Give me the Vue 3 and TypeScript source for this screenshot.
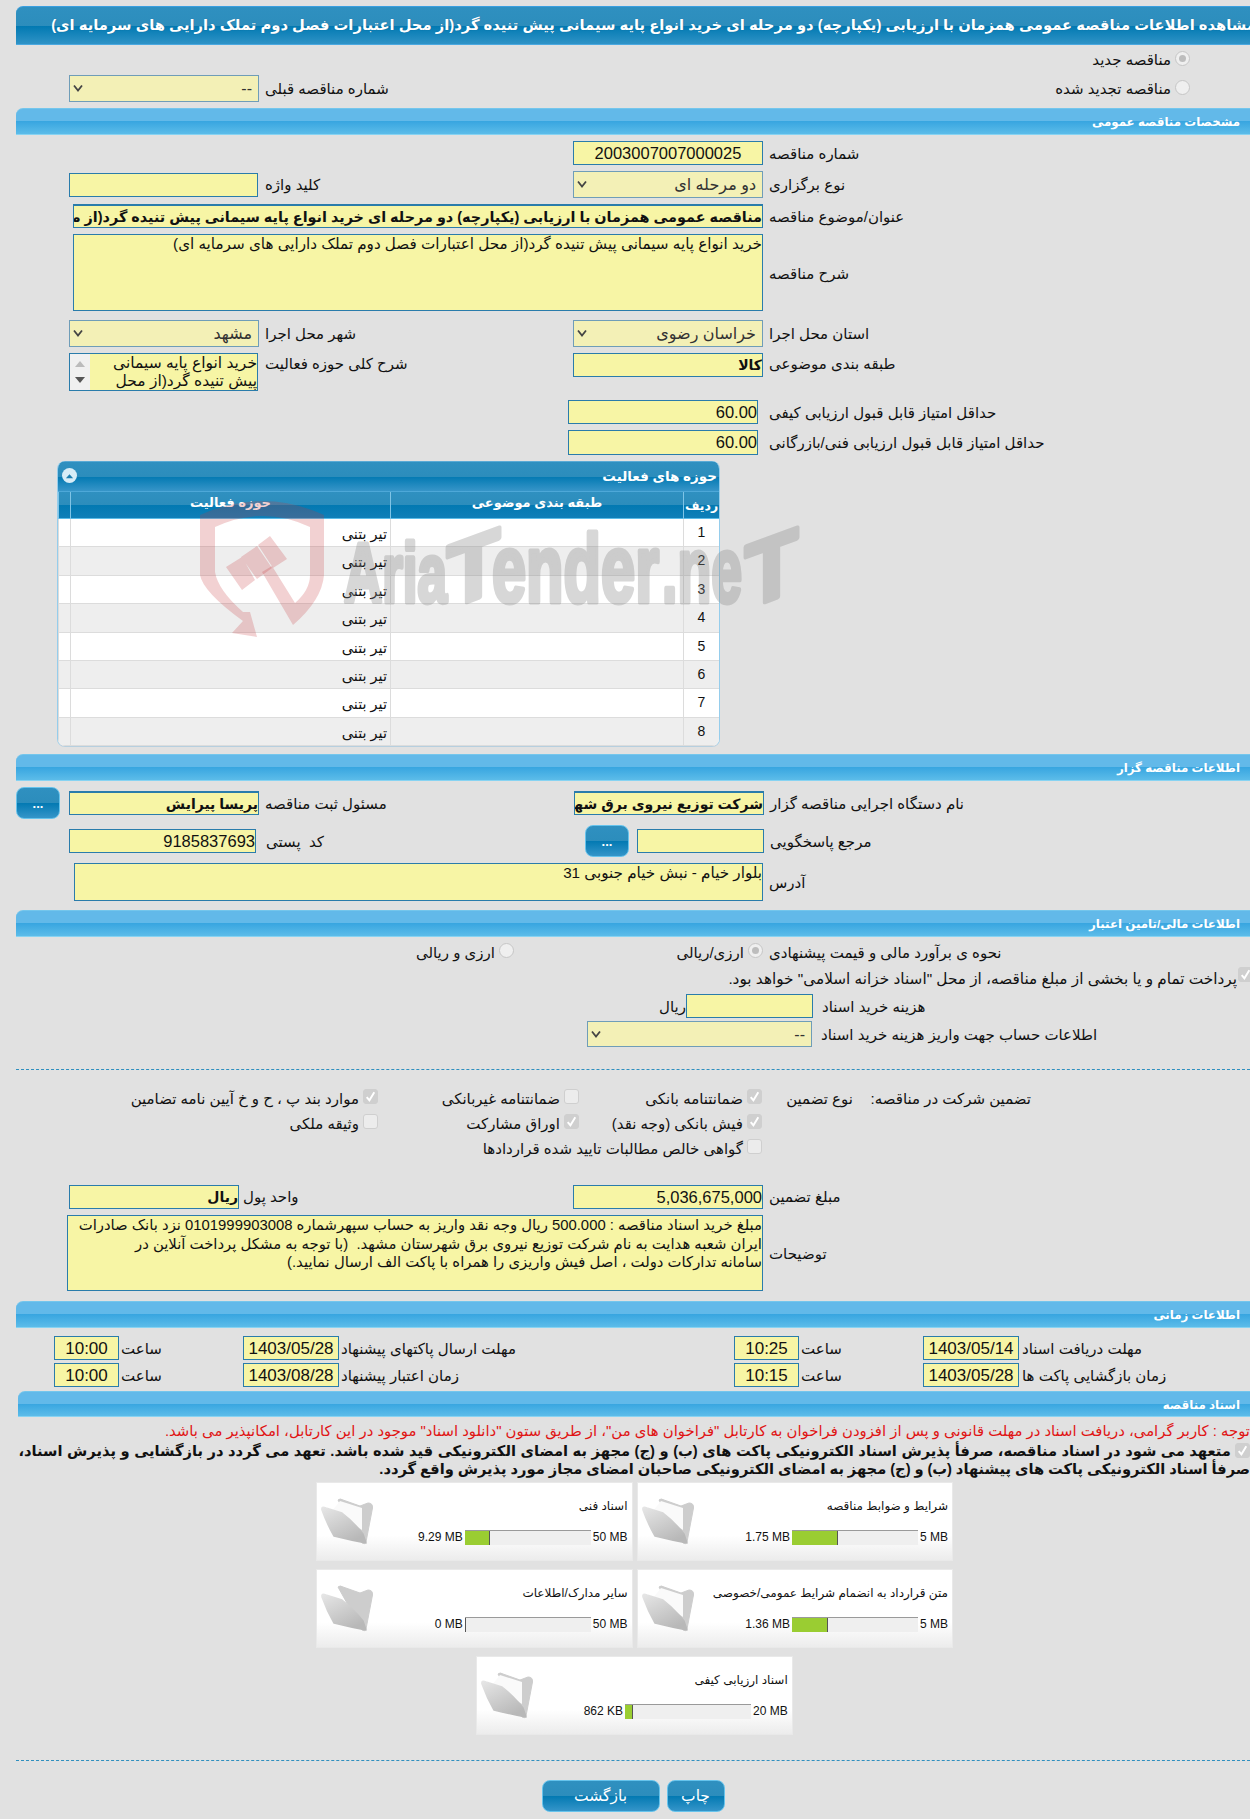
<script setup lang="ts">
interface Doc { title: string; used: string; max: string; pct: number; open: boolean }
const rows: number[] = [1, 2, 3, 4, 5, 6, 7, 8]
const docs: Doc[] = [
  { title: 'شرایط و ضوابط مناقصه', used: '1.75 MB', max: '5 MB', pct: 36.5, open: true },
  { title: 'اسناد فنی', used: '9.29 MB', max: '50 MB', pct: 20, open: true },
  { title: 'متن قرارداد به انضمام شرایط عمومی/خصوصی', used: '1.36 MB', max: '5 MB', pct: 28.5, open: true },
  { title: 'سایر مدارک/اطلاعات', used: '0 MB', max: '50 MB', pct: 0.8, open: false },
  { title: 'اسناد ارزیابی کیفی', used: '862 KB', max: '20 MB', pct: 6.5, open: true },
]
</script>

<template>
  <div class="page">
    <div class="title"><span>مشاهده اطلاعات مناقصه عمومی همزمان با ارزیابی (یکپارچه) دو مرحله ای خرید انواع پایه سیمانی پیش تنیده گرد(از محل اعتبارات فصل دوم تملک دارایی های سرمایه ای)</span></div>

    <div class="radio-first"><span class="opt"><i class="radio on"></i>مناقصه جدید</span></div>
    <div class="radio-second">
      <div class="select w190"><svg class="arrow" viewBox="0 0 10 8"><path d="M1 1.5 L5 6.5 L9 1.5" fill="none" stroke="#444" stroke-width="1.8"/></svg><span>--</span></div>
      <span class="lbl">شماره مناقصه قبلی</span>
      <span class="opt push"><i class="radio"></i>مناقصه تجدید شده</span>
    </div>

    <div class="sec mt6"><span>مشخصات مناقصه عمومی</span></div>

    <div class="pair mt6 h24">
      <span></span><span></span>
      <div class="field num center">2003007007000025</div>
      <span class="lbl">شماره مناقصه</span>
    </div>
    <div class="pair mt6 h27">
      <div class="field h25"></div>
      <span class="lbl">کلید واژه</span>
      <div class="select"><svg class="arrow" viewBox="0 0 10 8"><path d="M1 1.5 L5 6.5 L9 1.5" fill="none" stroke="#444" stroke-width="1.8"/></svg><span>دو مرحله ای</span></div>
      <span class="lbl">نوع برگزاری</span>
    </div>
    <div class="wide mt6 h24">
      <div class="field strong">مناقصه عمومی همزمان با ارزیابی (یکپارچه) دو مرحله ای خرید انواع پایه سیمانی پیش تنیده گرد(از محل اعتبارات فصل دوم تملک دارایی های سرمایه ای)</div>
      <span class="lbl">عنوان/موضوع مناقصه</span>
    </div>
    <div class="wide mt6 h77">
      <div class="area">خرید انواع پایه سیمانی پیش تنیده گرد(از محل اعتبارات فصل دوم تملک دارایی های سرمایه ای)</div>
      <span class="lbl">شرح مناقصه</span>
    </div>
    <div class="pair mt9 h27">
      <div class="select"><svg class="arrow" viewBox="0 0 10 8"><path d="M1 1.5 L5 6.5 L9 1.5" fill="none" stroke="#444" stroke-width="1.8"/></svg><span>مشهد</span></div>
      <span class="lbl">شهر محل اجرا</span>
      <div class="select"><svg class="arrow" viewBox="0 0 10 8"><path d="M1 1.5 L5 6.5 L9 1.5" fill="none" stroke="#444" stroke-width="1.8"/></svg><span>خراسان رضوی</span></div>
      <span class="lbl">استان محل اجرا</span>
    </div>
    <div class="pair mt6 h38">
      <div class="scrollbox">
        <div class="bar"><i class="up"></i><i class="down"></i></div>
        <div class="scrolltext">خرید انواع پایه سیمانی<br />پیش تنیده گرد(از محل</div>
      </div>
      <span class="lbl top">شرح کلی حوزه فعالیت</span>
      <div class="field h24 strong2">کالا</div>
      <span class="lbl top">طبقه بندی موضوعی</span>
    </div>
    <div class="score mt9 h24">
      <div class="field num">60.00</div>
      <span class="lbl">حداقل امتیاز قابل قبول ارزیابی کیفی</span>
    </div>
    <div class="score mt6 h25">
      <div class="field num">60.00</div>
      <span class="lbl">حداقل امتیاز قابل قبول ارزیابی فنی/بازرگانی</span>
    </div>

    <div class="panel">
      <div class="panel-head">
        <span class="collapse"><svg viewBox="0 0 10 6"><path d="M1 5.5 L5 1 L9 5.5 Z" fill="#1f7fb0"/></svg></span>
        <span class="panel-title">حوزه های فعالیت</span>
      </div>
      <div class="grid head">
        <span></span><span>حوزه فعالیت</span><span>طبقه بندی موضوعی</span><span class="rn-h">ردیف</span>
      </div>
      <div v-for="n in rows" :key="n" class="grid line" :class="{ alt: n % 2 === 0 }">
        <span></span><span class="cell">تیر بتنی</span><span></span><span class="rn">{{ n }}</span>
      </div>
    </div>

    <div class="sec mt7"><span>اطلاعات مناقصه گزار</span></div>

    <div class="pair-btn mt6">
      <div class="dots first">...</div>
      <div class="field h24 strong w190">پریسا پیرایش</div>
      <span class="lbl w315">مسئول ثبت مناقصه</span>
      <div class="field h24 strong w190 clipr">شرکت توزیع نیروی برق شهرستان مشهد</div>
      <span class="lbl">نام دستگاه اجرایی مناقصه گزار</span>
    </div>
    <div class="ref mt6">
      <div class="field num h24 w187">9185837693</div>
      <span class="lbl w329">کد&nbsp; پستی</span>
      <div class="dots">...</div>
      <div class="field h24 w127"></div>
      <span class="lbl">مرجع پاسخگویی</span>
    </div>
    <div class="addr mt6">
      <div class="area">بلوار خیام - نبش خیام جنوبی 31</div>
      <span class="lbl">آدرس</span>
    </div>

    <div class="sec mt9"><span>اطلاعات مالی/تامین اعتبار</span></div>

    <div class="method">
      <span class="opt opt-b"><i class="radio"></i>ارزی و ریالی</span>
      <span class="opt opt-a"><i class="radio on"></i>ارزی/ریالی</span>
      <span class="lbl">نحوه ی برآورد مالی و قیمت پیشنهادی</span>
    </div>
    <div class="pay"><i class="check on"><svg viewBox="0 0 12 12"><path d="M2.5 6.5 L5 9.5 L9.5 2" fill="none" stroke="#fff" stroke-width="1.8"/></svg></i><span>پرداخت تمام و یا بخشی از مبلغ مناقصه، از محل "اسناد خزانه اسلامی" خواهد بود.</span></div>
    <div class="cost">
      <span class="rial">ریال</span>
      <div class="field h25 w127"></div>
      <span class="lbl">هزینه خرید اسناد</span>
    </div>
    <div class="acct">
      <div class="select w225"><svg class="arrow" viewBox="0 0 10 8"><path d="M1 1.5 L5 6.5 L9 1.5" fill="none" stroke="#444" stroke-width="1.8"/></svg><span>--</span></div>
      <span class="lbl">اطلاعات حساب جهت واریز هزینه خرید اسناد</span>
    </div>

    <div class="dash d1"></div>

    <div class="guar first-g">
      <span class="opt"><i class="check on"><svg viewBox="0 0 12 12"><path d="M2.5 6.5 L5 9.5 L9.5 2" fill="none" stroke="#fff" stroke-width="1.8"/></svg></i>موارد بند پ ، ح و خ آیین نامه تضامین</span>
      <span class="opt"><i class="check"></i>ضمانتنامه غیربانکی</span>
      <span class="opt"><i class="check on"><svg viewBox="0 0 12 12"><path d="M2.5 6.5 L5 9.5 L9.5 2" fill="none" stroke="#fff" stroke-width="1.8"/></svg></i>ضمانتنامه بانکی</span>
      <span class="opt">نوع تضمین</span>
      <span class="opt">تضمین شرکت در مناقصه:</span>
    </div>
    <div class="guar">
      <span class="opt"><i class="check"></i>وثیقه ملکی</span>
      <span class="opt"><i class="check on"><svg viewBox="0 0 12 12"><path d="M2.5 6.5 L5 9.5 L9.5 2" fill="none" stroke="#fff" stroke-width="1.8"/></svg></i>اوراق مشارکت</span>
      <span class="opt"><i class="check on"><svg viewBox="0 0 12 12"><path d="M2.5 6.5 L5 9.5 L9.5 2" fill="none" stroke="#fff" stroke-width="1.8"/></svg></i>فیش بانکی (وجه نقد)</span>
    </div>
    <div class="guar">
      <span></span><span></span>
      <span class="opt"><i class="check"></i>گواهی خالص مطالبات تایید شده قراردادها</span>
    </div>

    <div class="amount">
      <div class="field h25 w170 strong2">ریال</div>
      <span class="lbl w334">واحد پول</span>
      <div class="field h25 num w190">5,036,675,000</div>
      <span class="lbl">مبلغ تضمین</span>
    </div>
    <div class="note mt6">
      <div class="area">مبلغ خرید اسناد مناقصه : 500.000 ریال وجه نقد واریز به حساب سپهرشماره 0101999903008 نزد بانک صادرات<br />ایران شعبه هدایت به نام شرکت توزیع نیروی برق شهرستان مشهد.&nbsp; (با توجه به مشکل پرداخت آنلاین در<br />سامانه تدارکات دولت ، اصل فیش واریزی را همراه با پاکت الف ارسال نمایید.)</div>
      <span class="lbl">توضیحات</span>
    </div>

    <div class="sec mt10"><span>اطلاعات زمانی</span></div>

    <div class="dates mt8">
      <div class="field num w65 center">10:00</div><span class="lbl hour">ساعت</span>
      <div class="field num w96 center">1403/05/28</div><span class="lbl dlabel">مهلت ارسال پاکتهای پیشنهاد</span>
      <div class="field num w65 center">10:25</div><span class="lbl hour">ساعت</span>
      <div class="field num w96 center">1403/05/14</div><span class="lbl">مهلت دریافت اسناد</span>
    </div>
    <div class="dates mt3">
      <div class="field num w65 center">10:00</div><span class="lbl hour">ساعت</span>
      <div class="field num w96 center">1403/08/28</div><span class="lbl dlabel">زمان اعتبار پیشنهاد</span>
      <div class="field num w65 center">10:15</div><span class="lbl hour">ساعت</span>
      <div class="field num w96 center">1403/05/28</div><span class="lbl">زمان بازگشایی پاکت ها</span>
    </div>

    <div class="sec sec5"><span>اسناد مناقصه</span></div>

    <div class="warn">توجه : کاربر گرامی، دریافت اسناد در مهلت قانونی و پس از افزودن فراخوان به کارتابل "فراخوان های من"، از طریق ستون "دانلود اسناد" موجود در این کارتابل، امکانپذیر می باشد.</div>
    <div class="pledge"><i class="check on inline"><svg viewBox="0 0 12 12"><path d="M2.5 6.5 L5 9.5 L9.5 2" fill="none" stroke="#fff" stroke-width="1.8"/></svg></i> <span class="pl1">متعهد می شود در اسناد مناقصه، صرفأ پذیرش اسناد الکترونیکی پاکت های (ب) و (ج) مجهز به امضای الکترونیکی قید شده باشد. تعهد می گردد در بازگشایی و پذیرش اسناد،</span><br /><span class="pl2">صرفأ اسناد الکترونیکی پاکت های پیشنهاد (ب) و (ج) مجهز به امضای الکترونیکی صاحبان امضای مجاز مورد پذیرش واقع گردد.</span></div>

    <div class="cards">
      <div v-for="d in docs" :key="d.title" class="card">
        <svg class="folder" viewBox="0 0 53 47">
          <defs>
            <linearGradient :id="'g' + d.pct" x1="0" y1="0" x2="0.6" y2="1"><stop offset="0" stop-color="#e6e6e6"/><stop offset="1" stop-color="#b8b8b8"/></linearGradient>
          </defs>
          <path d="M18 2 Q20 0 23 2 L40 8 L48 5 Q53 5 52.5 10 L46 44 Q45 47 42 45 Z" fill="#cdcdcd" stroke="#cdcdcd" stroke-linejoin="round"/>
          <path v-if="d.open" d="M20 3 L42 10 L42 32 L12 13 Z" fill="#fafafa"/>
          <path d="M2 12 Q1 8 6 10 L22 15 Q30 21 38 30 L43 36 L46 45 Q30 42 14 38 Q7 26 2 12 Z" :fill="'url(#g' + d.pct + ')'" :stroke="'url(#g' + d.pct + ')'" stroke-linejoin="round" stroke-width="1.5"/>
        </svg>
        <div class="card-body">
          <div class="card-title">{{ d.title }}</div>
          <div class="meter">
            <span>{{ d.used }}</span>
            <div class="track"><div class="fill" :style="{ width: d.pct + '%' }"></div></div>
            <span class="max">{{ d.max }}</span>
          </div>
        </div>
      </div>
    </div>

    <div class="dash d2"></div>

    <div class="actions">
      <div class="act back">بازگشت</div>
      <div class="act print">چاپ</div>
    </div>

    <svg class="watermark" viewBox="190 490 640 160">
      <path d="M200 515 Q263 487 324 515 L324 575 Q322 600 293 625 L262 572 L272 566 L295 603 Q310 590 310 575 L310 527 Q263 505 215 527 L215 572 Q218 590 243 612 L250 612 L257 637 L232 633 L243 621 Q203 592 200 575 Z" fill="#c8383c" fill-opacity="0.23"/>
      <path d="M226 567 L242 557 L255 580 L242 590 Z M241 557 L257 546 L272 568 L257 579 Z M258 545 L270 536 L287 559 L273 568 Z" fill="#c8383c" fill-opacity="0.23"/>
      <g class="wm-text">
        <text x="344" y="602" font-size="84" textLength="103" lengthAdjust="spacingAndGlyphs">Aria</text>
        <text x="0" y="0" font-size="90" textLength="53" lengthAdjust="spacingAndGlyphs" transform="translate(447 609) skewY(-20)">T</text>
        <text x="492" y="602" font-size="96" textLength="167" lengthAdjust="spacingAndGlyphs">ender</text>
        <text x="662" y="602" font-size="92" textLength="80" lengthAdjust="spacingAndGlyphs">.ne</text>
        <text x="0" y="0" font-size="90" textLength="53" lengthAdjust="spacingAndGlyphs" transform="translate(745 609) skewY(-20)">T</text>
      </g>
    </svg>
  </div>
</template>

<style>
html, body { margin: 0; background: #e1e1e1; }
</style>

<style scoped>
.page {
  position: relative;
  width: 1250px;
  height: 1819px;
  overflow: hidden;
  padding-top: 6px;
  box-sizing: border-box;
  background: #e1e1e1;
  color: #111;
  font-family: "Liberation Sans", "DejaVu Sans", sans-serif;
  font-size: 15px;
}
.mt3 { margin-top: 3px; }
.mt6 { margin-top: 6px; }
.mt7 { margin-top: 7px; }
.mt8 { margin-top: 8px; }
.mt9 { margin-top: 9px; }
.mt10 { margin-top: 10px; }
.h24 { height: 24px; }
.h25 { height: 25px; }
.h27 { height: 27px; }
.h38 { height: 38px; }
.h77 { height: 77px; }
.w65 { width: 65px; }
.w96 { width: 96px; }
.w127 { width: 127px; }
.w170 { width: 170px; }
.w187 { width: 187px; }
.w190 { width: 190px; }
.w225 { width: 225px; }
.w315 { width: 315px; }
.w329 { width: 329px; }
.w334 { width: 330px; }

.title {
  margin-left: 16px;
  height: 39px;
  box-sizing: border-box;
  border-top: 1px solid #3a9fe0;
  border-bottom: 1px solid #4aa8e0;
  border-top-left-radius: 7px;
  background: linear-gradient(#2f90c0 0, #2c8dbc 52%, #0279b2 52%, #2f93c6 100%);
  color: #fff;
  font-weight: bold;
  font-size: 14.76px;
  line-height: 36px;
  white-space: nowrap;
  direction: rtl;
  text-shadow: 0 0 1px rgba(0, 50, 90, .4);
}
.title span { display: inline-block; margin-right: -6px; }

.sec {
  margin-left: 16px;
  height: 27px;
  box-sizing: border-box;
  border-bottom: 1px solid #87d3f2;
  border-top: 1px solid #74c6ec;
  border-top-left-radius: 7px;
  background: linear-gradient(#62b9e9 0, #62b9e9 48%, #37a5e0 48%, #5cbce9 100%);
  color: #fff;
  font-weight: bold;
  font-size: 11.8px;
  direction: rtl;
  padding-right: 10px;
  line-height: 27px;
}
.sec5 { margin-left: 18px; margin-top: 4px; height: 26px; }

.lbl {
  display: block;
  align-self: center;
  direction: rtl;
  text-align: left;
  white-space: nowrap;
  padding-left: 6px;
  padding-top: 1px;
}
.lbl.top { align-self: start; margin-top: 1px; }

.field, .select {
  box-sizing: border-box;
  border: 1px solid #2a7cab;
  background: #f7f5a5;
  height: 24px;
  direction: rtl;
  white-space: nowrap;
  overflow: hidden;
  line-height: 22px;
}
.field.num { font-size: 16.5px; }
.dates .field.num { font-size: 17px; line-height: 23px; }
.field.center { text-align: center; }
.field.strong { font-weight: bold; font-size: 14px; border-top-width: 2px; }
.wide .field.strong { font-size: 14.4px; }
.field.strong2 { font-weight: bold; font-size: 14px; }
.select {
  position: relative;
  height: 27px;
  background: #f3f0b6;
  border-color: #6f9db8;
  padding-right: 6px;
  line-height: 25px;
  font-size: 16px;
  color: #333;
}
.arrow { position: absolute; left: 3px; top: 8px; width: 10px; height: 8px; }
.area {
  box-sizing: border-box;
  height: 100%;
  border: 1px solid #2a7cab;
  background: #f7f5a5;
  direction: rtl;
  line-height: 18.5px;
  overflow: hidden;
  font-size: 15.2px;
}
.note .area { font-size: 14.85px; }

.radio-first { height: 24px; margin-top: 6px; display: flex; justify-content: flex-end; padding-right: 60px; }
.radio-second { height: 27px; display: flex; padding-left: 69px; padding-right: 60px; }
.push { margin-left: auto; margin-top: 5px; }
.w190 { flex: none; }

.opt {
  display: flex;
  direction: rtl;
  white-space: nowrap;
  gap: 4px;
  line-height: 18px;
}
.radio {
  position: relative;
  width: 15px;
  height: 15px;
  box-sizing: border-box;
  flex: none;
  border-radius: 50%;
  border: 1px solid #c6c6c6;
  background: #efefef;
}
.radio.on::after {
  content: "";
  position: absolute;
  left: 3px;
  top: 3px;
  width: 7px;
  height: 7px;
  border-radius: 50%;
  background: #bdbdbd;
}
.check {
  display: block;
  width: 15px;
  height: 15px;
  box-sizing: border-box;
  flex: none;
  border-radius: 3px;
  border: 1px solid #cfcfcf;
  background: #ececec;
}
.check.on { background: #cfcfcf; }
.check svg { display: block; width: 13px; height: 13px; }
.check.inline { display: inline-block; margin: 0 0 -2px 0; }

.pair {
  display: grid;
  grid-template-columns: 190px 314px 190px 1fr;
  padding-left: 69px;
}
.pair > .field:first-child { width: 189px; align-self: center; }
.pair > .select { align-self: center; }
.wide {
  display: grid;
  grid-template-columns: 690px 1fr;
  padding-left: 73px;
}
.wide .lbl { align-self: center; padding-top: 2px; }
.wide .field { height: 24px; }
.score { display: flex; padding-left: 568px; }
.score .field { width: 190px; height: 100%; }
.score .lbl { padding-left: 11px; }

.scrollbox {
  display: flex;
  width: 189px;
  height: 38px;
  box-sizing: border-box;
  border: 1px solid #2a7cab;
  background: #f7f5a5;
  overflow: hidden;
}
.bar { width: 20px; flex: none; background: #f0f0f0; position: relative; }
.up, .down { position: absolute; left: 5px; width: 0; height: 0; border-left: 5px solid transparent; border-right: 5px solid transparent; }
.up { top: 7px; border-bottom: 6px solid #bbb; }
.down { top: 23px; border-top: 6px solid #555; }
.scrolltext { flex: 1; direction: rtl; line-height: 18px; white-space: nowrap; overflow: hidden; font-size: 15.5px; }

.panel {
  position: relative;
  margin: 6px 0 0 57px;
  width: 663px;
  height: 286px;
  box-sizing: border-box;
  background: #fff;
  border-radius: 8px 8px 8px 8px;
  border-left: 1px solid #95cdec;
  border-right: 1px solid #95cdec;
  border-bottom: 1px solid #b6cfdf;
  overflow: hidden;
}
.panel-head {
  display: flex;
  justify-content: space-between;
  align-items: center;
  height: 30px;
  box-sizing: border-box;
  padding: 0 2px 2px 4px;
  border-top: 1px solid #5aaad5;
  background: linear-gradient(#2f90c0 0, #2c8dbc 50%, #0279b2 50%, #3795c8 100%);
  color: #fff;
  font-weight: bold;
  font-size: 13.5px;
}
.panel-title { direction: rtl; }
.collapse {
  width: 15px;
  height: 15px;
  border-radius: 50%;
  background: #d8edf7;
  display: flex;
  align-items: center;
  justify-content: center;
}
.collapse svg { width: 9px; height: 6px; }
.grid {
  display: grid;
  grid-template-columns: 12px 320px 293px 1fr;
  direction: ltr;
}
.head {
  height: 28px;
  border-top: 1px solid #4ea8d8;
  border-bottom: 1px solid #5bbce8;
  box-sizing: border-box;
  background: linear-gradient(#2f90c0 0, #2c8dbc 50%, #0279b2 50%, #0f7fb8 100%);
  color: #fff;
  font-weight: bold;
  font-size: 13px;
  text-align: center;
  line-height: 22px;
}
.head > span { direction: rtl; border-left: 1px solid #7fc4e6; }
.head .rn-h { line-height: 28px; white-space: nowrap; font-size: 12.5px; }
.line { height: 28.4px; box-sizing: border-box; border-bottom: 1px solid #dcdcdc; background: #fff; }
.line.alt { background: #eee; }
.line > span { border-left: 1px solid #dcdcdc; }
.cell { direction: rtl; padding-right: 3px; line-height: 30px; font-size: 14.5px; }
.rn { text-align: center; font-size: 14px; line-height: 27px; }

.pair-btn { display: flex; align-items: center; height: 32px; padding-left: 16px; }
.dots {
  width: 44px;
  height: 32px;
  flex: none;
  box-sizing: border-box;
  border: 1px solid #66c3ec;
  border-radius: 8px;
  background: linear-gradient(#2f90c0 0, #2c8dbc 50%, #0279b2 50%, #3595c9 100%);
  color: #fff;
  text-align: center;
  font-weight: bold;
  font-size: 13px;
  line-height: 32px;
}
.dots.first { margin-right: 9px; }
.w315 { flex: none; box-sizing: border-box; }
.clipr { flex: none; }

.ref { display: flex; align-items: center; height: 32px; padding-left: 69px; }
.ref .w329 { flex: none; box-sizing: border-box; padding-left: 10px; }
.ref .dots { margin: 0 8px 0 0; }
.ref .field { flex: none; }

.addr {
  display: grid;
  grid-template-columns: 689px 1fr;
  padding-left: 74px;
  height: 38px;
}
.method { display: flex; margin-top: 6px; height: 20px; padding-left: 420px; }
.opt-b { width: 94px; justify-content: flex-start; margin-left: 0; }
.opt-a { width: 249px; margin-left: 0; }
.method .lbl { align-self: flex-start; line-height: 18px; padding-left: 6px; }
.method .opt { line-height: 20px; }
.pay {
  display: flex;
  direction: rtl;
  gap: 1px;
  margin: 6px -3px 0 0;
  height: 20px;
  line-height: 20px;
  white-space: nowrap;
  font-size: 15.3px;
}
.pay .check { margin-top: -2px; }
.cost { display: flex; height: 25px; margin-top: 5px; padding-left: 662px; }
.rial { width: 24px; direction: rtl; line-height: 25px; }
.cost .lbl { padding-left: 9px; }
.acct { display: flex; height: 26px; margin-top: 2px; padding-left: 587px; }
.acct .select { height: 26px; flex: none; }
.acct .lbl { padding-left: 9px; }

.dash { border-top: 1px dashed #2f8fbf; margin-left: 16px; height: 0; }
.d1 { margin-top: 22px; }
.d2 { margin-top: 25px; }

.guar {
  display: grid;
  grid-template-columns: 378px 201px 183px 91px 178px;
  height: 25px;
  box-sizing: border-box;
}
.guar .opt { line-height: 20px; }
.first-g { margin-top: 19px; }

.amount { display: flex; align-items: center; height: 25px; margin-top: 20px; padding-left: 69px; }
.amount .field { flex: none; }
.amount .w334 { flex: none; box-sizing: border-box; padding-left: 4px; width: 334px; }
.note {
  display: grid;
  grid-template-columns: 696px 1fr;
  padding-left: 67px;
  height: 76px;
}
.dates { display: flex; height: 24px; padding-left: 54px; }
.dates .field { flex: none; height: 100%; }
.dates .hour { width: 124px; flex: none; box-sizing: border-box; padding-left: 2px; }
.dates .dlabel { width: 395px; flex: none; box-sizing: border-box; padding-left: 2px; }
.dates .lbl:last-child { padding-left: 3px; }

.warn {
  margin-top: 4px;
  height: 20px;
  direction: rtl;
  color: #e01414;
  line-height: 20px;
  white-space: nowrap;
  font-size: 14.85px;
}
.pledge {
  margin-top: 1px;
  height: 36px;
  direction: rtl;
  font-weight: bold;
  font-size: 14.7px;
  line-height: 18px;
  white-space: nowrap;
}
.pl1 { word-spacing: .45px; }
.pl2 { word-spacing: -.2px; }

.cards {
  display: flex;
  flex-wrap: wrap;
  direction: rtl;
  justify-content: center;
  gap: 8px 4px;
  margin: 4px 0 0 315px;
  width: 639px;
}
.card {
  display: flex;
  width: 316.5px;
  height: 79px;
  box-sizing: border-box;
  direction: ltr;
  background: linear-gradient(#fff 0, #fff 68%, #ececec 100%);
  border: 1px solid #e9e9e9;
  padding: 15px 4px 0 3px;
}
.folder { width: 53px; height: 47px; flex: none; }
.card-body { flex: 1; display: flex; flex-direction: column; align-items: flex-end; }
.card-title { direction: rtl; font-size: 12px; white-space: nowrap; line-height: 16px; }
.meter { display: flex; align-items: center; gap: 2px; margin-top: 16px; font-size: 12px; white-space: nowrap; line-height: 15px; }
.track {
  width: 126px;
  height: 15px;
  box-sizing: border-box;
  background: #efefef;
  border-top: 1px solid #9a9a9a;
}
.fill { height: 100%; background: #9acd32; border-right: 1px solid #555; box-sizing: border-box; }

.actions { display: flex; justify-content: center; gap: 7px; margin: 19px 0 0 16px; }
.act {
  height: 32px;
  box-sizing: border-box;
  border: 1px solid #66c3ec;
  border-radius: 8px;
  background: linear-gradient(#2f90c0 0, #2c8dbc 50%, #0279b2 50%, #3595c9 100%);
  color: #fff;
  text-align: center;
  font-size: 15.5px;
  line-height: 30px;
}
.back { width: 118px; }
.print { width: 58px; }

.watermark {
  position: absolute;
  left: 190px;
  top: 490px;
  width: 640px;
  height: 160px;
  pointer-events: none;
}
.wm-text { opacity: 0.33; }
.wm-text text {
  font-family: "Liberation Sans", sans-serif;
  font-weight: bold;
  fill: #888;
  stroke: #888;
  stroke-width: 5px;
  stroke-linejoin: round;
}
</style>
